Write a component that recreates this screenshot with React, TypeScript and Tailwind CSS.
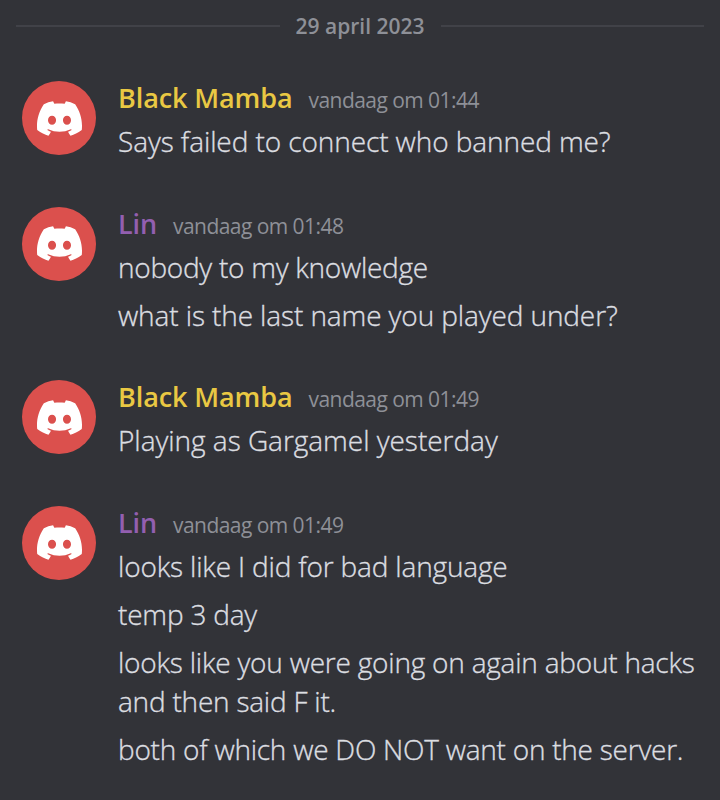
import { SiDiscord } from 'react-icons/si'

interface Line {
  text: string
  tracking: string
}

interface MessageGroupProps {
  author: string
  authorClass: string
  time: string
  lines: Line[]
}

const groups: MessageGroupProps[] = [
  {
    author: 'Black Mamba',
    authorClass: 'text-[#e9c843]',
    time: 'vandaag om 01:44',
    lines: [{ text: 'Says failed to connect who banned me?', tracking: 'tracking-[-0.09px]' }]
  },
  {
    author: 'Lin',
    authorClass: 'text-[#935fb0]',
    time: 'vandaag om 01:48',
    lines: [
      { text: 'nobody to my knowledge', tracking: 'tracking-[-0.27px]' },
      { text: 'what is the last name you played under?', tracking: 'tracking-[-0.11px]' }
    ]
  },
  {
    author: 'Black Mamba',
    authorClass: 'text-[#e9c843]',
    time: 'vandaag om 01:49',
    lines: [{ text: 'Playing as Gargamel yesterday', tracking: 'tracking-[-0.03px]' }]
  },
  {
    author: 'Lin',
    authorClass: 'text-[#935fb0]',
    time: 'vandaag om 01:49',
    lines: [
      { text: 'looks like I did for bad language', tracking: 'tracking-[-0.17px]' },
      { text: 'temp 3 day', tracking: 'tracking-[-0.2px]' },
      { text: 'looks like you were going on again about hacks and then said F it.', tracking: 'tracking-[-0.22px]' },
      { text: 'both of which we DO NOT want on the server.', tracking: 'tracking-[-0.24px]' }
    ]
  }
]

function DateDivider({ label }: { label: string }) {
  return (
    <div className="flex items-center gap-4 px-4 h-[51px]">
      <div className="flex-1 h-0.5 bg-[#414248]" />
      <span className="pt-0.5 text-[21px] font-semibold text-[#8e9097] whitespace-nowrap">{label}</span>
      <div className="flex-1 h-0.5 bg-[#414248]" />
    </div>
  )
}

function MessageGroup({ author, authorClass, time, lines }: MessageGroupProps) {
  return (
    <div className="flex items-start gap-[22px] pl-[22px] pr-4">
      <div className="flex-shrink-0 w-[74px] h-[74px] rounded-full bg-[#db504d] flex items-center justify-center text-white">
        <SiDiscord className="w-[45px] h-[45px]" />
      </div>
      <div className="flex-1 min-w-0">
        <div className="flex items-baseline gap-4 h-[41px] leading-[34px] whitespace-nowrap">
          <span className={`text-[27px] font-semibold tracking-[-0.1px] ${authorClass}`}>{author}</span>
          <span className="text-[21px] tracking-[-0.55px] text-[#8e9097]">{time}</span>
        </div>
        <div className="flex flex-col gap-[9px]">
          {lines.map((line) => (
            <p
              key={line.text}
              className={`text-[28px] leading-[39px] font-light text-[#dcdee1] [-webkit-text-stroke:0.35px_#dcdee1] ${line.tracking}`}
            >
              {line.text}
            </p>
          ))}
        </div>
      </div>
    </div>
  )
}

export default function App() {
  return (
    <div className="h-[800px] overflow-hidden bg-[#323338] font-['Open_Sans',sans-serif]">
      <DateDivider label="29 april 2023" />
      <div className="flex flex-col gap-[45.5px] pt-[30px]">
        {groups.map((group, i) => (
          <MessageGroup key={i} {...group} />
        ))}
      </div>
    </div>
  )
}
